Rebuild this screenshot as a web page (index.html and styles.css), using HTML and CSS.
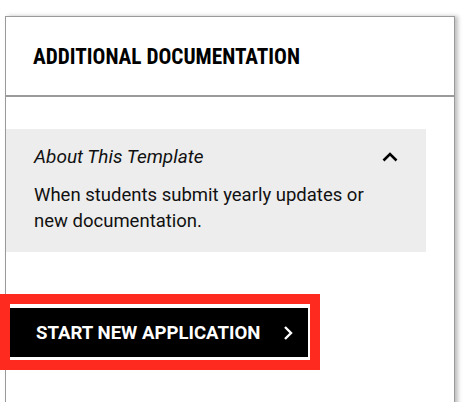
FILE: index.html
```html
<!DOCTYPE html>
<html lang="en">

<head>
  <meta charset="UTF-8" />
  <meta name="viewport" content="width=device-width, initial-scale=1.0" />
  <title>Additional Documentation</title>
  <link rel="stylesheet" href="styles.css">
</head>

<body>

  <div class="panel">
    <div class="panel-header">
      <h2>ADDITIONAL DOCUMENTATION</h2>
    </div>

    <div class="panel-body">
      <!-- Template description -->
      <div class="about-box">
        <div class="about-head">
          <span class="about-title">About This Template</span>
          <svg class="chevron-up" width="16" height="10" viewBox="0 0 16 10">
            <path d="M1.5 8.5 L8 2 L14.5 8.5" fill="none" stroke="#000" stroke-width="2.6" />
          </svg>
        </div>
        <p class="about-text">When students submit yearly updates or new documentation.</p>
      </div>

      <button class="start-btn">
        START NEW APPLICATION
        <svg class="chevron-right" width="10" height="16" viewBox="0 0 10 16">
          <path d="M2 2 L8 8 L2 14" fill="none" stroke="#fff" stroke-width="2.4" />
        </svg>
      </button>
    </div>
  </div>

</body>

</html>
```

FILE: styles.css
```css
* {
  margin: 0;
  padding: 0;
  box-sizing: border-box;
}

body {
  font-family: Roboto, "Liberation Sans", sans-serif;
  background-color: #fff;
  padding: 16px 11px 0 5px;
  height: 402px;
  overflow: hidden;
}

.panel {
  border: 1px solid #9a9a9a;
  border-bottom: none;
  height: 400px;
  box-shadow: 3px 0 4px rgba(0, 0, 0, 0.25);
}

.panel-header {
  height: 80px;
  display: flex;
  align-items: center;
  padding-left: 27px;
  border-bottom: 2px solid #9a9a9a;
}

.panel-header h2 {
  font-family: "Roboto Condensed", Roboto, sans-serif;
  font-stretch: condensed;
  font-weight: 700;
  font-size: 21.3px;
  color: #000;
}

.panel-body {
  padding-top: 32px;
}

.about-box {
  background: #ededed;
  width: 420px;
  height: 123px;
  padding: 16px 28px 0 28px;
}

.about-head {
  display: flex;
  justify-content: space-between;
  align-items: center;
  height: 24px;
}

.about-title {
  font-style: italic;
  font-size: 19px;
  line-height: 24px;
  color: #111;
}

.chevron-up {
  margin-right: 0;
}

.about-text {
  font-size: 18.5px;
  line-height: 26px;
  color: #111;
  margin-top: 13px;
}

.start-btn {
  display: flex;
  align-items: center;
  gap: 23px;
  margin: 52px 0 0 4px;
  width: 300px;
  height: 56px;
  padding-left: 26px;
  background: #000;
  color: #fff;
  font-family: Roboto, sans-serif;
  font-weight: 700;
  font-size: 18.6px;
  border: solid #fff;
  border-width: 4px 2px 3px 0;
  outline: 10px solid #ff2a1f;
  cursor: pointer;
}
```
